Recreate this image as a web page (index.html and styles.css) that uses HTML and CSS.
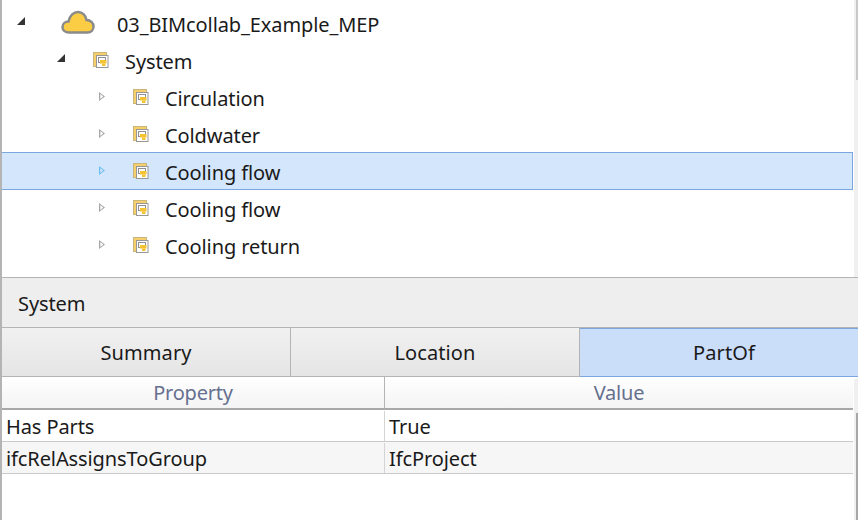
FILE: index.html
```html
<!DOCTYPE html>
<html lang="en">
<head>
    <meta charset="UTF-8">
    <title>System</title>
    <link rel="stylesheet" href="styles.css">
</head>
<body>
    <svg class="defs" width="0" height="0">
        <symbol id="doc" viewBox="0 0 16 16">
            <rect x="0.5" y="0.5" width="13" height="14" fill="#f5cf6c" stroke="#c9b678"/>
            <rect x="3.5" y="3.5" width="11.500" height="12" fill="#fff" stroke="#979797"/>
            <rect x="5.500" y="5.500" width="7" height="5" fill="#fff" stroke="#8f8f8f"/>
            <rect x="7" y="8" width="6.500" height="3.500" fill="#f5c232"/>
            <rect x="9" y="11.500" width="3.500" height="2.500" fill="#f5c232"/>
        </symbol>
    </svg>

    <div class="tree-pane">
        <ul class="tree">
            <li class="tree-row root">
                <span class="arrow open"></span>
                <span class="node-icon">
                    <svg width="34" height="24" viewBox="0 0 34 24"><path d="M8 22.5C4 22.5 1.5 20 1.5 17C1.5 14 4 11.5 7.5 11.5C8.5 6 12.5 2 17 2C21.500 2 25 5.500 25.500 10C29.500 10 32.500 13 32.500 16.500C32.500 20 30 22.500 26.500 22.500Z" fill="#fbcd44" stroke="#8b8b8b" stroke-width="2.500"/></svg>
                </span>
                <span>03_BIMcollab_Example_MEP</span>
            </li>
            <li class="tree-row level-1">
                <span class="arrow open"></span>
                <span class="node-icon"><svg width="16" height="16"><use href="#doc"/></svg></span>
                <span>System</span>
            </li>
            <li class="tree-row level-2">
                <span class="arrow"></span>
                <span class="node-icon"><svg width="16" height="16"><use href="#doc"/></svg></span>
                <span>Circulation</span>
            </li>
            <li class="tree-row level-2">
                <span class="arrow"></span>
                <span class="node-icon"><svg width="16" height="16"><use href="#doc"/></svg></span>
                <span>Coldwater</span>
            </li>
            <li class="tree-row level-2 selected">
                <span class="arrow"></span>
                <span class="node-icon"><svg width="16" height="16"><use href="#doc"/></svg></span>
                <span>Cooling flow</span>
            </li>
            <li class="tree-row level-2">
                <span class="arrow"></span>
                <span class="node-icon"><svg width="16" height="16"><use href="#doc"/></svg></span>
                <span>Cooling flow</span>
            </li>
            <li class="tree-row level-2">
                <span class="arrow"></span>
                <span class="node-icon"><svg width="16" height="16"><use href="#doc"/></svg></span>
                <span>Cooling return</span>
            </li>
        </ul>
        <div class="scrollbar"><div class="thumb"></div></div>
    </div>

    <div class="section-title">System</div>

    <div class="tabs">
        <div class="tab">Summary</div>
        <div class="tab">Location</div>
        <div class="tab active">PartOf</div>
    </div>

    <div class="grid-pane">
        <div class="grid">
            <div class="grid-row grid-head">
                <div class="cell">Property</div>
                <div class="cell">Value</div>
            </div>
            <div class="grid-row">
                <div class="cell">Has Parts</div>
                <div class="cell">True</div>
            </div>
            <div class="grid-row alt">
                <div class="cell">ifcRelAssignsToGroup</div>
                <div class="cell">IfcProject</div>
            </div>
        </div>
        <div class="scrollbar low"><div class="thumb"></div></div>
    </div>
</body>
</html>
```

FILE: styles.css
```css
* {
    margin: 0;
    padding: 0;
    box-sizing: border-box;
}

body {
    width: 858px;
    height: 520px;
    overflow: hidden;
    background-color: #ffffff;
    color: #1a1a1a;
    font-family: "Noto Sans", "Open Sans", sans-serif;
    font-size: 20px;
    letter-spacing: -0.1px;
    border-left: 2px solid #b4b4b4;
    display: flex;
    flex-direction: column;
}

.defs {
    position: absolute;
}

/* Tree */
.tree-pane {
    height: 278px;
    flex: none;
    display: flex;
    margin-left: -1px;
    border-bottom: 1px solid #b4b4b4;
    padding-top: 4px;
}

.tree {
    flex: 1;
    list-style: none;
}

.tree-row {
    height: 37px;
    display: flex;
    align-items: center;
    padding-top: 4px;
    border: 1px solid transparent;
    border-top: none;
    border-bottom: none;
    margin-right: 1px;
}

.tree-row.root {
    padding-left: 15px;
}

.level-1 {
    padding-left: 55px;
}

.level-2 {
    padding-left: 95px;
}

.tree-row.selected {
    height: 38px;
    margin-bottom: -1px;
    padding-top: 3px;
    background-color: #d4e6fb;
    border: 1px solid #7aa7e0;
}

.arrow {
    width: 36px;
    height: 9px;
    flex: none;
    display: flex;
    padding-left: 2px;
}

.arrow::before {
    content: "";
    width: 6px;
    height: 9px;
    margin-top: -2px;
    background-color: #a6a6a6;
    clip-path: polygon(0 0, 100% 50%, 0 100%, 0 0, 22% 22%, 22% 78%, 72% 50%, 22% 22%);
}

.arrow.open {
    padding-left: 0;
}

.arrow.open::before {
    width: 8px;
    height: 8px;
    margin-top: -3px;
    background-color: #333333;
    clip-path: polygon(100% 0, 100% 100%, 0 100%);
}

.root .arrow {
    width: 44px;
}

.selected .arrow::before {
    background-color: #6cbdf0;
}

.node-icon {
    width: 32px;
    flex: none;
    display: flex;
    margin-top: -3px;
}

.root .node-icon {
    width: 56px;
    margin-top: -6px;
}

.scrollbar {
    width: 4px;
    flex: none;
    background-color: #f0f0f0;
    display: flex;
    justify-content: flex-end;
    margin-top: -4px;
}

.thumb {
    width: 2px;
    height: 80px;
    background-color: #c8c8c8;
}

/* Section title */
.section-title {
    height: 50px;
    flex: none;
    margin-left: -1px;
    padding-left: 17px;
    padding-top: 2px;
    display: flex;
    align-items: center;
    background-color: #eeeeee;
    border-bottom: 1px solid #b4b4b4;
}

/* Tabs */
.tabs {
    height: 49px;
    flex: none;
    display: grid;
    grid-template-columns: 289px 289px 1fr;
    border-bottom: 1px solid #b4b4b4;
    letter-spacing: 0.1px;
}

.tab {
    display: flex;
    align-items: center;
    justify-content: center;
    background: linear-gradient(#f1f1f1, #e5e5e5);
    border-right: 1px solid #b4b4b4;
}

.tab.active {
    padding-left: 10px;
    background: #cadefa;
    border-right: none;
    border-top: 1px solid #7aa7e0;
    border-bottom: 1px solid #7aa7e0;
    margin-bottom: -1px;
}

/* Property grid */
.grid-pane {
    flex: 1;
    display: flex;
}

.grid {
    flex: 1;
    margin-right: 1px;
}

.grid-row {
    height: 32px;
    display: grid;
    grid-template-columns: 383px 1fr;
    padding-top: 1px;
    border-bottom: 1px solid #cacaca;
}

.cell {
    padding-left: 4px;
    display: flex;
    align-items: center;
}

.cell:first-child {
    border-right: 1px solid #d4d4d4;
}

.alt {
    background-color: #f6f6f6;
}

.grid-head {
    height: 33px;
    padding-top: 0;
    background: linear-gradient(#ffffff, #f4f4f4);
    color: #66708f;
    letter-spacing: -0.2px;
    border-bottom: 2px solid #a8a8a8;
}

.grid-head .cell {
    padding-left: 0;
    justify-content: center;
}

.grid-head .cell:first-child {
    border-right-color: #b4b4b4;
}

.scrollbar.low {
    margin-top: 2px;
}

.scrollbar.low .thumb {
    margin-top: 34px;
    height: 107px;
    background-color: #a8a8a8;
}
```
